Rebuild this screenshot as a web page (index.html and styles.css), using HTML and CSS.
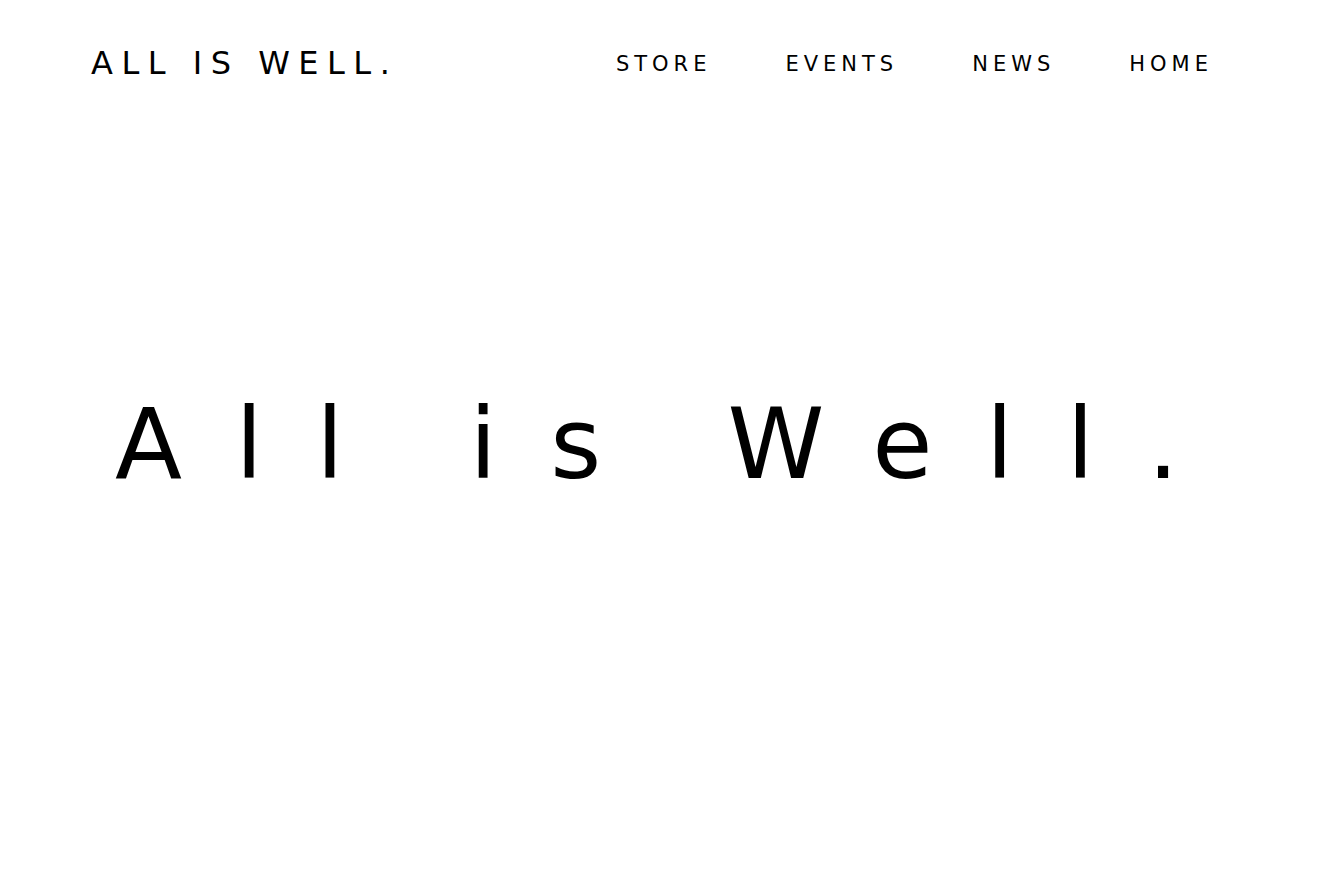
FILE: index.html
```html
<!DOCTYPE html>
<html lang="en">
<head>
<meta charset="utf-8">
<title>All is Well.</title>
<link rel="stylesheet" href="styles.css">
</head>
<body>
<header class="site-header">
  <a class="logo" href="#">ALL IS WELL.</a>
  <nav class="nav">
    <a class="nav-link" href="#">STORE</a>
    <a class="nav-link" href="#">EVENTS</a>
    <a class="nav-link" href="#">NEWS</a>
    <a class="nav-link" href="#">HOME</a>
  </nav>
</header>
<main class="hero">
  <h1 class="hero-title">All is Well.</h1>
</main>
</body>
</html>
```

FILE: styles.css
```css
* { box-sizing: border-box; }
html, body { margin: 0; padding: 0; background: #fff; }
body {
  font-family: "DejaVu Sans", "Noto Sans", sans-serif;
  color: #000;
  width: 1337px;
  height: 886px;
  overflow: hidden;
}
a { color: inherit; text-decoration: none; }
.site-header {
  display: flex;
  align-items: center;
  justify-content: space-between;
  height: 124px;
  padding: 0 124px 0 91px;
}
.logo {
  font-size: 32px;
  line-height: 1;
  letter-spacing: 8.5px;
  font-weight: 400;
  margin-top: 1px;
}
.nav {
  display: flex;
  gap: 74px;
  margin-top: 4px;
}
.nav-link {
  font-size: 21px;
  line-height: 1;
  letter-spacing: 5px;
}
.hero {
  display: flex;
  justify-content: center;
  align-items: center;
  height: 640px;
  padding-left: 10px;
}
.hero-title {
  margin: 0;
  font-size: 98px;
  line-height: 1;
  font-weight: 400;
  letter-spacing: 53.5px;
  word-spacing: -12px;
}
```
